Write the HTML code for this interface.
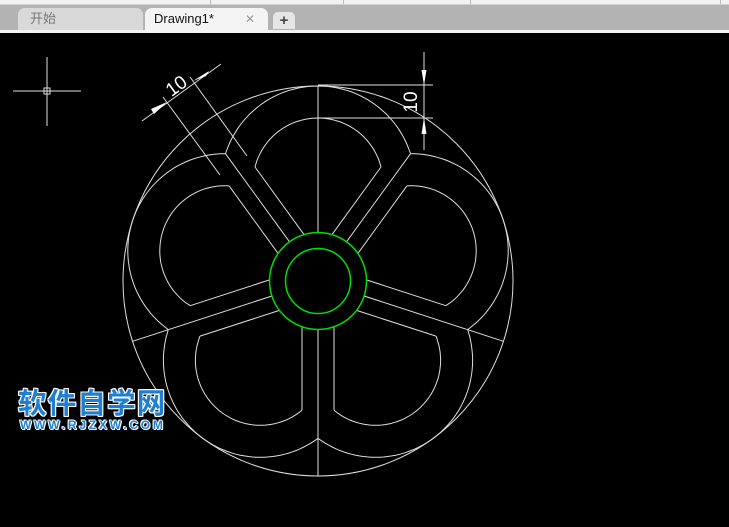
<!DOCTYPE html>
<html><head><meta charset="utf-8"><style>
html,body{margin:0;padding:0;}
body{width:729px;height:527px;background:#000;position:relative;overflow:hidden;font-family:"Liberation Sans","Noto Sans CJK SC",sans-serif;}
#bar{position:absolute;left:0;top:0;width:729px;height:33px;background:#b3b3b3;}
#strip{position:absolute;left:0;top:0;width:729px;height:4px;background:#f2f2f2;border-bottom:1px solid #d0d0d0;}
.vl{position:absolute;top:0;width:1px;height:4px;background:#bdbdbd;}
#wl{position:absolute;left:0;top:30px;width:729px;height:3px;background:#f4f4f4;}
.tab{position:absolute;top:8px;height:22px;border-radius:7px 7px 0 0;font-size:13px;line-height:22px;}
#t1{left:18px;width:125px;background:#d9d9d9;color:#777;padding-left:12px;box-sizing:border-box;}
#t2{left:145px;width:123px;background:#f4f4f4;color:#111;padding-left:9px;box-sizing:border-box;}
#t2 .x{position:absolute;left:100px;top:0;color:#999;font-size:12px;}
#t3{left:273px;top:12px;width:22px;height:17px;background:#e6e6e6;border-radius:5px 5px 0 0;color:#444;font-size:15px;line-height:17px;text-align:center;font-weight:bold;}
svg{position:absolute;left:0;top:0;}
.wm{position:absolute;left:18px;top:385px;color:#1e7fd2;font-weight:bold;font-size:28.5px;letter-spacing:1.2px;
text-shadow:1px 0 #fff,-1px 0 #fff,0 1px #fff,0 -1px #fff,1px 1px #fff,-1px -1px #fff,1px -1px #fff,-1px 1px #fff;font-family:"Noto Sans CJK SC",sans-serif;line-height:34px;}
.wm2{position:absolute;left:20px;top:418px;color:#1e7fd2;font-weight:bold;font-size:12px;letter-spacing:2.8px;
text-shadow:1px 0 #fff,-1px 0 #fff,0 1px #fff,0 -1px #fff,1px 1px #fff,-1px -1px #fff;line-height:14px;}
</style></head><body>
<div id="bar"></div><div id="strip"></div>
<div class="vl" style="left:210px"></div><div class="vl" style="left:343px"></div><div class="vl" style="left:470px"></div><div class="vl" style="left:720px"></div>
<div id="wl"></div>
<div class="tab" id="t1">开始</div>
<div class="tab" id="t2">Drawing1*<span class="x">✕</span></div>
<div class="tab" id="t3">+</div>
<svg id="s" width="729" height="527" viewBox="0 0 729 527">
<g stroke="#e0e0e0" stroke-width="1" fill="none">
<line x1="47" y1="57" x2="47" y2="126"/><line x1="13" y1="91" x2="81" y2="91"/>
<rect x="44" y="88" width="6" height="6"/>
<circle cx="318" cy="281" r="195"/>
<line x1="318" y1="85" x2="433" y2="85"/><line x1="318" y1="118" x2="433" y2="118"/>
<line x1="424" y1="52" x2="424" y2="150"/>
<line x1="142" y1="121" x2="221" y2="64"/>
<line x1="163" y1="97" x2="220" y2="175"/><line x1="190" y1="77" x2="247" y2="156"/>
</g>
<g fill="#fff">
<polygon points="424,85 421.5,70 426.5,70"/><polygon points="424,118 421.5,134 426.5,134"/>
<polygon points="167,102 151,109 154,114"/><polygon points="193,81 209,71 206,76"/>
</g>
<text x="0" y="0" fill="#fff" font-size="19" font-family="Liberation Sans,sans-serif" text-anchor="middle" transform="translate(417,102) rotate(-90)">10</text>
<text x="0" y="0" fill="#fff" font-size="19" font-family="Liberation Sans,sans-serif" text-anchor="middle" transform="translate(180,91) rotate(-36)">10</text>
<g id="g" stroke="#e0e0e0" stroke-width="1" fill="none"></g>
<circle cx="318" cy="281" r="48.5" stroke="#00e000" stroke-width="1.5" fill="none"/>
<circle cx="318" cy="281" r="32.5" stroke="#00e000" stroke-width="1.5" fill="none"/>
</svg>
<div class="wm">软件自学网</div>
<div class="wm2">WWW.RJZXW.COM</div>
<script>
(function(){
var C=[318,281],g=document.getElementById('g'),d2r=Math.PI/180,out='';
function pt(a,r){return [C[0]+r*Math.cos(a*d2r),C[1]-r*Math.sin(a*d2r)];}
function line(p,q){out+='<line x1="'+p[0].toFixed(1)+'" y1="'+p[1].toFixed(1)+'" x2="'+q[0].toFixed(1)+'" y2="'+q[1].toFixed(1)+'"/>';}
var spokes=[[90,195],[54,158],[126,158],[198,195],[342,195],[270,195]];
spokes.forEach(function(s){line(pt(s[0],48.5),pt(s[0],s[1]));});
function arc(P,r,Q1,Q2,a){
 function ang(Q){var t=Math.atan2(-(Q[1]-P[1]),Q[0]-P[0])-a*d2r;while(t>Math.PI)t-=2*Math.PI;while(t<=-Math.PI)t+=2*Math.PI;return t;}
 var t1=ang(Q1),t2=ang(Q2),pts=[];
 for(var i=0;i<=60;i++){var t=t1+(t2-t1)*i/60+a*d2r;pts.push((P[0]+r*Math.cos(t)).toFixed(1)+','+(P[1]-r*Math.sin(t)).toFixed(1));}
 out+='<polyline points="'+pts.join(' ')+'"/>';
}
[90,18,162,234,306].forEach(function(a){
 var P=pt(a,98);
 arc(P,97,pt(a-36,158),pt(a+36,158),a);
 var ends=[];
 [-36,36].forEach(function(o){
  var sa=a+o,dx=Math.cos(sa*d2r),dy=-Math.sin(sa*d2r);
  var nx=-dy,ny=dx;
  var px=P[0]-C[0],py=P[1]-C[1];
  if((px*nx+py*ny)<0){nx=-nx;ny=-ny;}
  var off=16,bx=C[0]+nx*off,by=C[1]+ny*off;
  var fx=bx-P[0],fy=by-P[1];
  var B=2*(fx*dx+fy*dy),Cc=fx*fx+fy*fy-65*65;
  var t1=(-B+Math.sqrt(B*B-4*Cc))/2;
  var t0=Math.sqrt(48.5*48.5-off*off);
  var A=[bx+dx*t0,by+dy*t0],E=[bx+dx*t1,by+dy*t1];
  line(A,E);ends.push(E);
 });
 arc(P,65,ends[0],ends[1],a);
});
g.innerHTML=out;
})();
</script>
</body></html>
